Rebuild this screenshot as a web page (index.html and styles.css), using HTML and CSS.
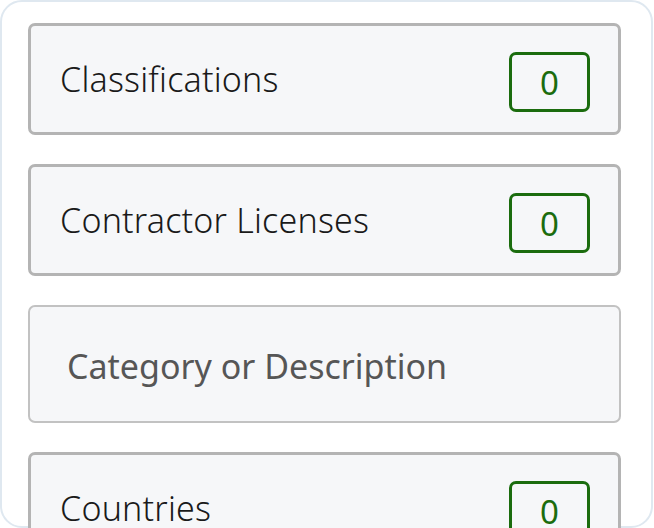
FILE: index.html
```html
<!DOCTYPE html>
<html>
<head>
<meta charset="utf-8">
<link rel="stylesheet" href="styles.css">
</head>
<body>
<div class="panel">
  <div class="row">
    <span class="label">Classifications</span>
    <span class="badge">0</span>
  </div>
  <div class="row">
    <span class="label">Contractor Licenses</span>
    <span class="badge">0</span>
  </div>
  <div class="field">
    <input class="field-input" type="text" placeholder="Category or Description">
  </div>
  <div class="row">
    <span class="label">Countries</span>
    <span class="badge">0</span>
  </div>
</div>
</body>
</html>
```
FILE: styles.css
```css
html, body {
  margin: 0;
  padding: 0;
  background: #ffffff;
  overflow: hidden;
}
body {
  width: 654px;
  height: 528px;
  font-family: "Noto Sans", "Open Sans", sans-serif;
}
.panel {
  box-sizing: border-box;
  width: 653px;
  height: 528px;
  border: 2px solid #dfe8f0;
  border-radius: 22px;
  padding: 21px 30px 0 26px;
  display: flex;
  flex-direction: column;
  gap: 29px;
  background: #ffffff;
}
.row {
  flex: none;
  box-sizing: border-box;
  height: 112px;
  border: 3px solid #b4b4b4;
  border-radius: 7px;
  background: #f6f7f9;
  display: flex;
  align-items: center;
  justify-content: space-between;
  padding: 0 28px 0 29px;
}
.label {
  font-size: 34px;
  font-weight: 300;
  letter-spacing: 0.2px;
  color: #1a1a1a;
}
.badge {
  box-sizing: border-box;
  width: 81px;
  height: 60px;
  margin-top: 6px;
  border: 3px solid #1b6c0e;
  border-radius: 7px;
  display: flex;
  align-items: center;
  justify-content: center;
  font-size: 33px;
  font-weight: 400;
  color: #1b6c0e;
}
.field {
  flex: none;
  box-sizing: border-box;
  height: 118px;
  border: 2px solid #c2c2c2;
  border-radius: 7px;
  background: #f6f7f9;
  display: flex;
  align-items: center;
  padding: 4px 0 0 37px;
}
.field-input {
  flex: 1;
  border: none;
  outline: none;
  background: transparent;
  font-family: "Noto Sans", "Open Sans", sans-serif;
  font-size: 34px;
  color: #1a1a1a;
  padding: 0;
}
.field-input::placeholder {
  color: #565656;
  opacity: 1;
}
```
